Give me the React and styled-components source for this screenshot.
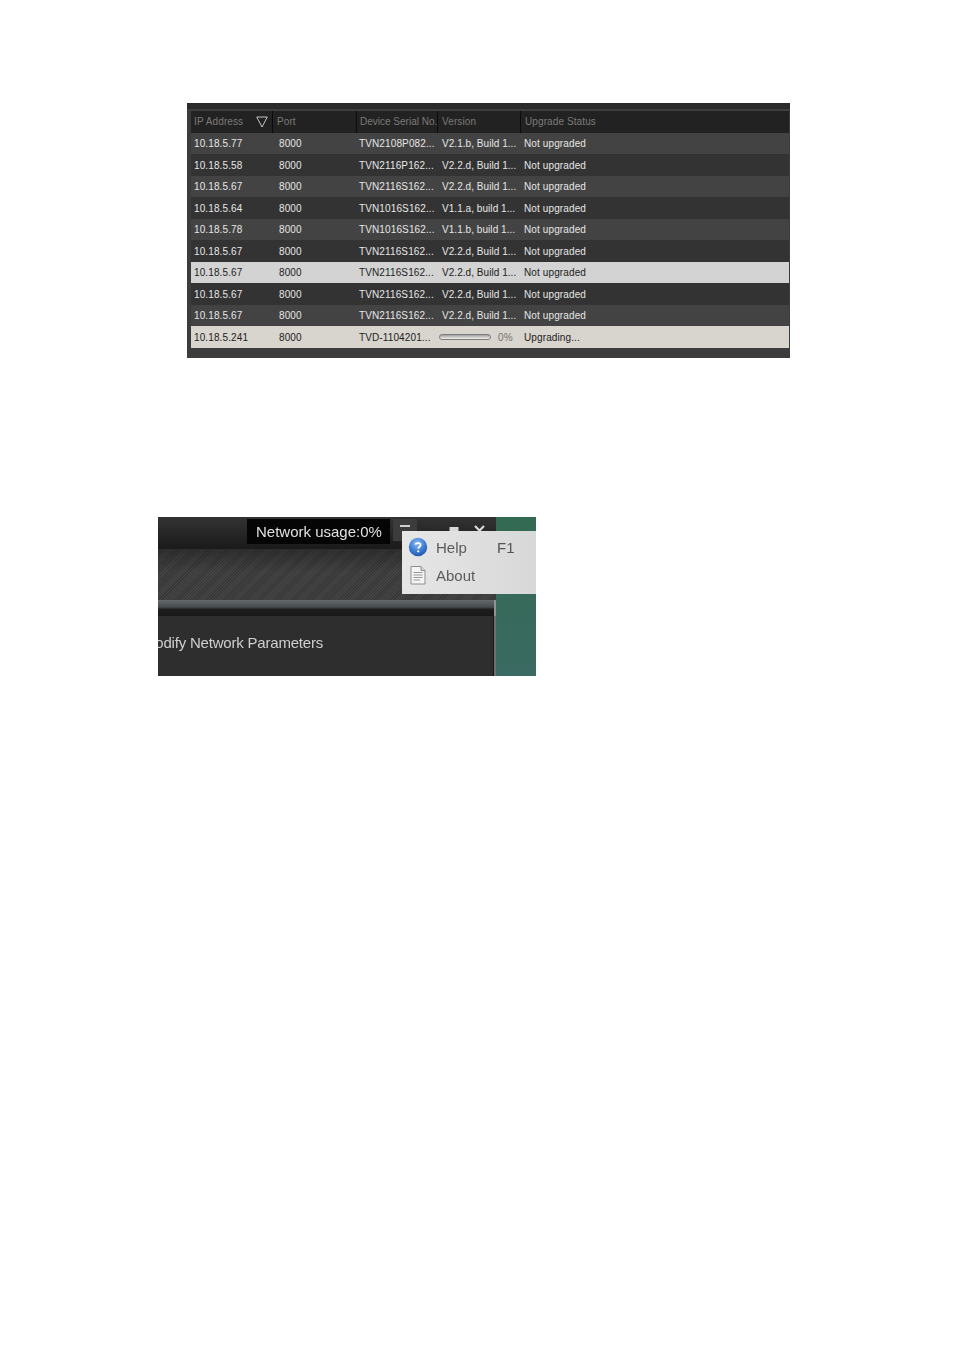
import React from 'react';
import styled, { createGlobalStyle } from 'styled-components';

const devices = [
  ['10.18.5.77', 'TVN2108P082...', 'V2.1.b, Build 1...', 'Not upgraded'],
  ['10.18.5.58', 'TVN2116P162...', 'V2.2.d, Build 1...', 'Not upgraded'],
  ['10.18.5.67', 'TVN2116S162...', 'V2.2.d, Build 1...', 'Not upgraded'],
  ['10.18.5.64', 'TVN1016S162...', 'V1.1.a, build 1...', 'Not upgraded'],
  ['10.18.5.78', 'TVN1016S162...', 'V1.1.b, build 1...', 'Not upgraded'],
  ['10.18.5.67', 'TVN2116S162...', 'V2.2.d, Build 1...', 'Not upgraded'],
  ['10.18.5.67', 'TVN2116S162...', 'V2.2.d, Build 1...', 'Not upgraded', 'selected'],
  ['10.18.5.67', 'TVN2116S162...', 'V2.2.d, Build 1...', 'Not upgraded'],
  ['10.18.5.67', 'TVN2116S162...', 'V2.2.d, Build 1...', 'Not upgraded'],
];

const rowColors = {
  odd: '#434343',
  even: '#333333',
  selected: '#d3d3d3',
  active: '#d8d4ce',
};

const App = () => {
  return (
    <Page>
      <GlobalStyle />
      <UpgradeTable>
        <TopStrip />
        <TableBody>
          <HeaderRow>
            <HeaderCell>
              IP Address
              <SortIcon width="12" height="12" viewBox="0 0 12 12">
                <path d="M0.7 1 H11.3 L6 11 Z" fill="none" stroke="#c4c4c4" strokeWidth="1" />
              </SortIcon>
            </HeaderCell>
            <PortHeader>Port</PortHeader>
            <SerialHeader>Device Serial No.</SerialHeader>
            <PortHeader>Version</PortHeader>
            <HeaderCell>Upgrade Status</HeaderCell>
          </HeaderRow>
          {devices.map((d, i) => (
            <Row key={i} $bg={d[4] ? rowColors[d[4]] : i % 2 ? rowColors.even : rowColors.odd} $dark={!!d[4]}>
              <Cell>{d[0]}</Cell>
              <PortCell>8000</PortCell>
              <SerialCell>{d[1]}</SerialCell>
              <VersionCell>{d[2]}</VersionCell>
              <Cell>{d[3]}</Cell>
            </Row>
          ))}
          <Row $bg={rowColors.active} $dark>
            <Cell>10.18.5.241</Cell>
            <PortCell>8000</PortCell>
            <SerialCell>TVD-1104201...</SerialCell>
            <ProgressCell>
              <ProgressTrack />
              <ProgressLabel>0%</ProgressLabel>
            </ProgressCell>
            <Cell>Upgrading...</Cell>
          </Row>
          <TableFoot />
        </TableBody>
      </UpgradeTable>

      <AppWindow>
        <MainColumn>
          <TitleBar>
            <UsageBox>Network usage:0%</UsageBox>
            <MenuButton>
              <MenuBar />
            </MenuButton>
            <WindowControls>
              <svg width="10" height="10" viewBox="0 0 10 10">
                <rect x="0.5" y="2" width="9" height="8" fill="#d8d8d8" />
              </svg>
              <svg width="11" height="10" viewBox="0 0 11 10">
                <path d="M1 1 L10 10 M10 1 L1 10" stroke="#d8d8d8" strokeWidth="2.2" />
              </svg>
            </WindowControls>
          </TitleBar>
          <HatchBand />
          <TabBar />
          <Content>
            <ContentLabel>Modify Network Parameters</ContentLabel>
          </Content>
        </MainColumn>
        <Desktop />
        <HelpMenu>
          <MenuItem>
            <svg width="20" height="20" viewBox="0 0 20 20">
              <defs>
                <radialGradient id="helpBall" cx="45%" cy="30%" r="75%">
                  <stop offset="0" stopColor="#8db9ee" />
                  <stop offset="0.55" stopColor="#3f7fd6" />
                  <stop offset="1" stopColor="#1c50a8" />
                </radialGradient>
              </defs>
              <circle cx="10" cy="10" r="9.2" fill="url(#helpBall)" />
              <path
                d="M7.4 7.6 C7.6 5.8 12.6 5.4 12.6 8 C12.6 9.8 10.2 9.8 10.2 11.8"
                fill="none"
                stroke="#fff"
                strokeWidth="1.8"
              />
              <circle cx="10.2" cy="14.3" r="1.1" fill="#fff" />
            </svg>
            <MenuText>Help</MenuText>
            <Shortcut>F1</Shortcut>
          </MenuItem>
          <MenuItem>
            <svg width="20" height="20" viewBox="0 0 20 20">
              <path d="M3 1.5 H13 L17 5.5 V19 H3 Z" fill="#f4f4f4" stroke="#8f8f8f" strokeWidth="1" />
              <path d="M13 1.5 V5.5 H17" fill="#d4d4d4" stroke="#8f8f8f" strokeWidth="1" />
              <path d="M5.5 7.5 H14.5 M5.5 10 H14.5 M5.5 12.5 H14.5 M5.5 15 H12" stroke="#9a9a9a" strokeWidth="1" />
            </svg>
            <MenuText>About</MenuText>
          </MenuItem>
        </HelpMenu>
      </AppWindow>
    </Page>
  );
};

export default App;

const GlobalStyle = createGlobalStyle`
  html, body {
    margin: 0;
    padding: 0;
    background: #ffffff;
  }
  body {
    font-family: "Liberation Sans", Arial, sans-serif;
  }
`;

const Page = styled.div`
  width: 954px;
  height: 1350px;
  padding-top: 103px;
  box-sizing: border-box;
  overflow: hidden;
`;

const UpgradeTable = styled.div`
  width: 603px;
  height: 255px;
  margin-left: 187px;
  background: #3c3c3c;
  display: flex;
  flex-direction: column;
`;

const TopStrip = styled.div`
  height: 6px;
  flex: none;
  background: #2b2b2b;
  border-bottom: 2px solid #3e3e3e;
`;

const TableBody = styled.div`
  margin-left: 4px;
  margin-right: 1px;
  flex: 1;
  display: flex;
  flex-direction: column;
`;

const columns = '82px 84px 81px 83px 1fr';

const HeaderRow = styled.div`
  height: 21.7px;
  flex: none;
  display: grid;
  grid-template-columns: ${columns};
  background: #222222;
`;

const HeaderCell = styled.div`
  display: flex;
  align-items: center;
  justify-content: space-between;
  padding: 0 5px 0 3px;
  font-size: 10px;
  letter-spacing: 0.1px;
  color: #7c7a78;
  border-right: 1px solid #0c0c0c;
  white-space: nowrap;
  overflow: hidden;
  box-sizing: border-box;
  &:last-child {
    border-right: none;
    padding-left: 4px;
  }
`;

const PortHeader = styled(HeaderCell)`
  padding-left: 4px;
`;

const SerialHeader = styled(HeaderCell)`
  padding: 0 0 0 3px;
  letter-spacing: 0;
`;

const SortIcon = styled.svg`
  flex: none;
  margin-right: -1px;
`;

const Row = styled.div`
  height: 21.5px;
  flex: none;
  display: grid;
  grid-template-columns: ${columns};
  align-items: center;
  background: ${(p) => p.$bg};
  color: ${(p) => (p.$dark ? '#222222' : '#e6e6e6')};
`;

const Cell = styled.div`
  font-size: 10px;
  letter-spacing: 0.12px;
  padding: 1px 0 0 3px;
  white-space: nowrap;
`;

const PortCell = styled(Cell)`
  padding-left: 6px;
`;

const SerialCell = styled(Cell)`
  padding-left: 2px;
`;

const VersionCell = styled(Cell)`
  padding-left: 4px;
  letter-spacing: 0.05px;
`;

const ProgressCell = styled(Cell)`
  display: flex;
  align-items: center;
  padding-left: 1px;
`;

const ProgressTrack = styled.div`
  width: 50px;
  height: 4px;
  border: 1px solid #7f7f7f;
  border-radius: 3px;
  background: linear-gradient(#9f9f9f, #f2f0ec);
`;

const ProgressLabel = styled.span`
  margin-left: 7px;
  font-size: 10px;
  color: #77736e;
`;

const TableFoot = styled.div`
  flex: 1;
  background: #3c3c3c;
`;

const AppWindow = styled.div`
  position: relative;
  display: flex;
  width: 378px;
  height: 159px;
  margin-top: 159px;
  margin-left: 158px;
  overflow: hidden;
  filter: blur(0.35px);
`;

const MainColumn = styled.div`
  width: 338px;
  flex: none;
  display: flex;
  flex-direction: column;
`;

const TitleBar = styled.div`
  height: 32px;
  flex: none;
  display: flex;
  align-items: flex-start;
  padding: 2px 0 0 89px;
  box-sizing: border-box;
  background: linear-gradient(#333333, #1a1a1a);
`;

const UsageBox = styled.div`
  width: 143px;
  height: 25px;
  display: flex;
  align-items: center;
  padding-left: 9px;
  box-sizing: border-box;
  background: #050505;
  color: #e0e0e0;
  font-size: 15px;
  white-space: nowrap;
`;

const MenuButton = styled.div`
  width: 24px;
  height: 22px;
  margin-left: 3px;
  background: #3c3c3c;
  display: flex;
  justify-content: center;
  padding-top: 6px;
  box-sizing: border-box;
`;

const MenuBar = styled.div`
  width: 10px;
  height: 2px;
  background: #cfcfcf;
`;

const WindowControls = styled.div`
  display: flex;
  align-items: flex-start;
  gap: 15px;
  margin: 6px 0 0 32px;
`;

const HatchBand = styled.div`
  height: 51px;
  flex: none;
  background:
    linear-gradient(rgba(0, 0, 0, 0.28), rgba(0, 0, 0, 0) 45%),
    repeating-linear-gradient(135deg, #383838 0 1px, #444444 1px 2px);
`;

const TabBar = styled.div`
  height: 16px;
  flex: none;
  box-sizing: border-box;
  border-right: 2px solid #8d9294;
  background: linear-gradient(#656a6d 0, #44494c 45%, #1d1d1d 58%, #181818 100%);
`;

const Content = styled.div`
  flex: 1;
  box-sizing: border-box;
  padding-top: 18px;
  overflow: hidden;
  background: #2e2e2e;
  border-right: 2px solid #6d6f70;
  box-shadow: inset -1px 0 0 #161616;
`;

const ContentLabel = styled.div`
  margin-left: -15px;
  color: #cfcfcf;
  font-size: 15px;
  letter-spacing: -0.2px;
  white-space: nowrap;
`;

const Desktop = styled.div`
  flex: 1;
  background: linear-gradient(#336a52, #3a6a62);
`;

const HelpMenu = styled.div`
  position: absolute;
  top: 14px;
  left: 244px;
  width: 134px;
  height: 63px;
  padding: 2px 0 0 6px;
  box-sizing: border-box;
  background: linear-gradient(90deg, #e6e6e6, #d8d8d8);
  display: flex;
  flex-direction: column;
`;

const MenuItem = styled.div`
  height: 28px;
  display: flex;
  align-items: center;
  color: #5c5c5c;
  font-size: 15px;
`;

const MenuText = styled.span`
  margin-left: 8px;
  width: 61px;
`;

const Shortcut = styled.span`
  color: #555555;
`;
